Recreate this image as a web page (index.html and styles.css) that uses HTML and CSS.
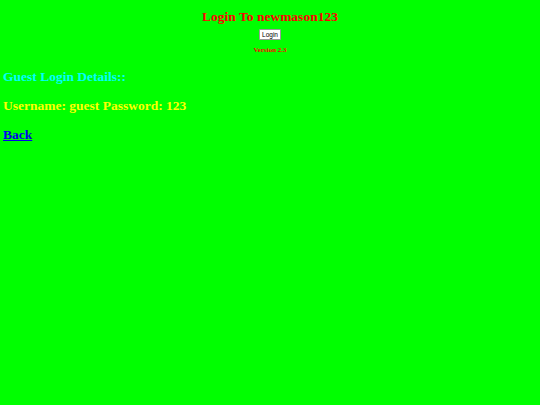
FILE: index.html
```html
<!DOCTYPE html>
<html>
<head>
<meta charset="utf-8">
<link rel="stylesheet" href="styles.css">
</head>
<body>
<div class="top">
  <h2 class="title">Login To newmason123</h2>
  <button class="btn">Login</button>
  <p class="version">Version 2.3</p>
</div>
<h3 class="guest">Guest Login Details::</h3>
<h3 class="creds">Username: guest Password: 123</h3>
<h3 class="back"><a href="#">Back</a></h3>
</body>
</html>
```
FILE: styles.css
```css
html, body {
  margin: 0;
  padding: 0;
  background: #00ff00;
}
body {
  padding: 0 3px;
  font-family: "Liberation Serif", "Times New Roman", serif;
}
.top {
  display: flex;
  flex-direction: column;
  align-items: center;
  padding-top: 9px;
}
.title {
  margin: 0;
  font-size: 13.5px;
  line-height: 16px;
  color: #ff0000;
  font-weight: bold;
}
.btn {
  margin-top: 4px;
  font-family: "Liberation Sans", Arial, sans-serif;
  font-size: 6.5px;
  padding: 1px 2px;
  background: #fff;
  border: 1px solid #999;
  border-radius: 1px;
  line-height: 7px;
  color: #000;
}
.version {
  margin: 6px 0 0;
  font-size: 7px;
  font-weight: bold;
  color: #ff0000;
  line-height: 8px;
}
h3 {
  margin: 0;
  font-size: 13.5px;
  line-height: 16px;
  font-weight: bold;
}
.guest {
  margin-top: 15px;
  color: #00ffff;
}
.creds {
  margin-top: 13px;
  color: #ffff00;
}
.back {
  margin-top: 13px;
}
.back a {
  color: #0000ee;
}
```
